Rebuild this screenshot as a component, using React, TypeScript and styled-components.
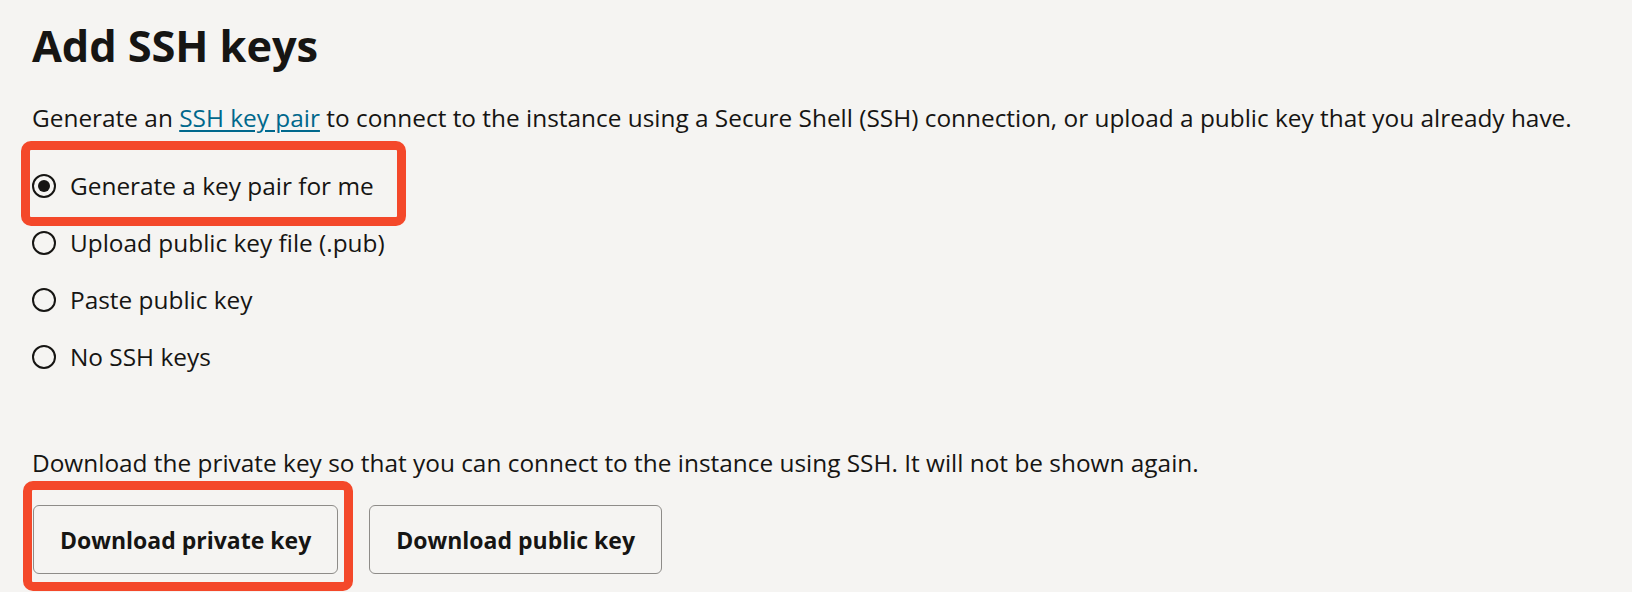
import React from "react";
import styled, { createGlobalStyle } from "styled-components";

const GlobalStyle = createGlobalStyle`
  html, body {
    margin: 0;
    padding: 0;
    background: #f5f4f2;
  }
  body {
    font-family: "Open Sans", "Noto Sans", Arial, sans-serif;
    color: #161513;
  }
`;

const Page = styled.main`
  box-sizing: border-box;
  min-height: 592px;
  display: flex;
  flex-direction: column;
  align-items: flex-start;
  padding: 20px 32px 24px 32px;
`;

const Title = styled.h1`
  margin: 0;
  font-size: 43.4px;
  line-height: 52px;
  font-weight: 700;
  letter-spacing: -0.1px;
`;

const Text = styled.p<{ $top: number }>`
  margin: ${(p) => p.$top}px 0 0 0;
  font-size: 24.4px;
  line-height: 32px;
  white-space: nowrap;
`;

const Link = styled.a`
  color: #00688c;
  text-decoration: underline;
  text-underline-offset: 3px;
  text-decoration-thickness: 1.5px;
`;

const RadioGroup = styled.div`
  display: flex;
  flex-direction: column;
  align-items: flex-start;
  gap: 25px;
  margin-top: 36px;
`;

const Callout = styled.div<{ $t: number; $r: number; $b: number; $l: number }>`
  position: relative;
  display: flex;
  &::after {
    content: "";
    position: absolute;
    top: ${(p) => p.$t}px;
    right: ${(p) => p.$r}px;
    bottom: ${(p) => p.$b}px;
    left: ${(p) => p.$l}px;
    border: 9.5px solid #f4482a;
    border-radius: 10px;
    pointer-events: none;
  }
`;

const Option = styled.label`
  display: inline-flex;
  align-items: center;
  gap: 14px;
  height: 32px;
  font-size: 24.4px;
  line-height: 32px;
  white-space: nowrap;
  cursor: pointer;
`;

const RadioCircle = styled.span<{ $checked?: boolean }>`
  box-sizing: border-box;
  width: 24px;
  height: 24px;
  border-radius: 50%;
  border: 2px solid #161513;
  display: flex;
  align-items: center;
  justify-content: center;
  flex: none;
  &::before {
    content: "";
    width: 12px;
    height: 12px;
    border-radius: 50%;
    background: #161513;
    display: ${(p) => (p.$checked ? "block" : "none")};
  }
`;

const ButtonRow = styled.div`
  display: flex;
  gap: 31px;
  margin-top: 26px;
  padding-left: 1px;
`;

const Button = styled.button`
  box-sizing: border-box;
  height: 69px;
  padding: 0 26px;
  background: #f5f4f2;
  border: 1px solid #8e8c89;
  border-radius: 6px;
  font-family: "Open Sans", "Noto Sans", Arial, sans-serif;
  font-size: 23px;
  font-weight: 700;
  color: #161513;
  white-space: nowrap;
  cursor: pointer;
`;

const options = [
  "Generate a key pair for me",
  "Upload public key file (.pub)",
  "Paste public key",
  "No SSH keys",
];

export default function App() {
  return (
    <>
      <GlobalStyle />
      <Page>
        <Title>Add SSH keys</Title>
        <Text $top={30}>
          Generate an <Link href="#">SSH key pair</Link> to connect to the instance using a Secure Shell (SSH)
          connection, or upload a public key that you already have.
        </Text>
        <RadioGroup>
          {options.map((o, i) =>
            i === 0 ? (
              <Callout key={o} $t={-29} $r={-32} $b={-24} $l={-11}>
                <Option>
                  <RadioCircle $checked />
                  {o}
                </Option>
              </Callout>
            ) : (
              <Option key={o}>
                <RadioCircle />
                {o}
              </Option>
            )
          )}
        </RadioGroup>
        <Text $top={74}>
          Download the private key so that you can connect to the instance using SSH. It will not be shown again.
        </Text>
        <ButtonRow>
          <Callout $t={-24} $r={-15} $b={-17} $l={-10}>
            <Button>Download private key</Button>
          </Callout>
          <Button>Download public key</Button>
        </ButtonRow>
      </Page>
    </>
  );
}
